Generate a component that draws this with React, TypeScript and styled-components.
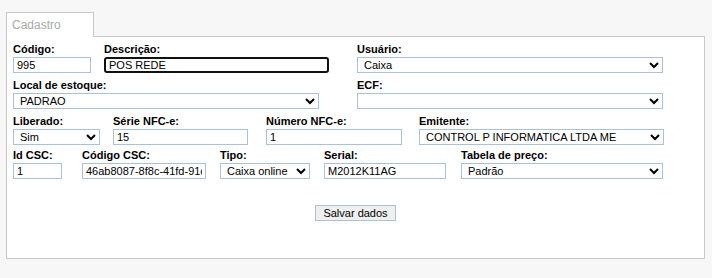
import * as React from 'react';
import styled, { createGlobalStyle } from 'styled-components';

const GlobalStyle = createGlobalStyle`
  html, body {
    margin: 0;
    padding: 0;
    background: #f7f7f7;
  }
  body {
    font-family: "Liberation Sans", Arial, sans-serif;
  }
`;

const Page = styled.div`
  padding: 12px 7px 0 6px;
`;

const TabBar = styled.div`
  display: flex;
  height: 25px;
`;

const Tab = styled.div`
  box-sizing: border-box;
  width: 88px;
  border: 1px solid #c9c9c9;
  border-bottom: none;
  background: #fff;
  color: #a9a9a9;
  font-size: 12px;
  line-height: 14px;
  padding: 5px 0 0 5px;
`;

const TabFill = styled.div`
  flex: 1;
  border-bottom: 1px solid #c9c9c9;
`;

const Panel = styled.div`
  background: #fff;
  border: 1px solid #c9c9c9;
  border-top: none;
  padding: 6px 6px 37px 6px;
`;

const Row = styled.div<{ $mt?: number }>`
  display: flex;
  align-items: flex-start;
  margin-top: ${p => p.$mt ?? 0}px;
`;

const Field = styled.div<{ $w: number; $ml?: number }>`
  display: flex;
  flex-direction: column;
  width: ${p => p.$w}px;
  margin-left: ${p => p.$ml ?? 0}px;
`;

const Label = styled.label`
  font-size: 11px;
  font-weight: bold;
  line-height: 13px;
  color: #000;
  margin-bottom: 1px;
  white-space: nowrap;
`;

const TextInput = styled.input<{ $focused?: boolean }>`
  box-sizing: border-box;
  width: 100%;
  height: 16px;
  margin: 0;
  padding: 0 3px;
  font-family: "Liberation Sans", Arial, sans-serif;
  font-size: 11px;
  color: #000;
  background: #fff;
  border: ${p => (p.$focused ? '2px solid #111' : '1px solid #a8c2d6')};
  border-radius: ${p => (p.$focused ? '3px' : '0')};
  outline: none;
`;

const Select = styled.select`
  box-sizing: border-box;
  width: 100%;
  height: 16px;
  margin: 0;
  padding: 0 0 0 2px;
  font-family: "Liberation Sans", Arial, sans-serif;
  font-size: 11px;
  color: #000;
  background-color: #fff;
  border: 1px solid #a8c2d6;
  border-radius: 0;
  outline: none;
`;

const Actions = styled.div`
  display: flex;
  justify-content: center;
  margin-top: 26px;
`;

const Button = styled.button`
  box-sizing: border-box;
  width: 81px;
  height: 16px;
  padding: 0;
  font-family: "Liberation Sans", Arial, sans-serif;
  font-size: 11px;
  line-height: 14px;
  color: #000;
  background: #efefef;
  border: 1px solid #a8c2d6;
  border-radius: 0;
`;

const noop = () => {};

export default function App() {
  return (
    <>
      <GlobalStyle />
      <Page>
        <TabBar>
          <Tab>Cadastro</Tab>
          <TabFill />
        </TabBar>
        <Panel>
          <Row>
            <Field $w={78}>
              <Label>Código:</Label>
              <TextInput value="995" onChange={noop} />
            </Field>
            <Field $w={225} $ml={13}>
              <Label>Descrição:</Label>
              <TextInput $focused value="POS REDE" onChange={noop} />
            </Field>
            <Field $w={306} $ml={28}>
              <Label>Usuário:</Label>
              <Select value="caixa" onChange={noop}>
                <option value="caixa">Caixa</option>
              </Select>
            </Field>
          </Row>
          <Row $mt={6}>
            <Field $w={306}>
              <Label>Local de estoque:</Label>
              <Select value="padrao" onChange={noop}>
                <option value="padrao">PADRAO</option>
              </Select>
            </Field>
            <Field $w={306} $ml={38}>
              <Label>ECF:</Label>
              <Select value="" onChange={noop}>
                <option value=""></option>
              </Select>
            </Field>
          </Row>
          <Row $mt={6}>
            <Field $w={87}>
              <Label>Liberado:</Label>
              <Select value="sim" onChange={noop}>
                <option value="sim">Sim</option>
                <option value="nao">Não</option>
              </Select>
            </Field>
            <Field $w={135} $ml={13}>
              <Label>Série NFC-e:</Label>
              <TextInput value="15" onChange={noop} />
            </Field>
            <Field $w={136} $ml={18}>
              <Label>Número NFC-e:</Label>
              <TextInput value="1" onChange={noop} />
            </Field>
            <Field $w={245} $ml={17}>
              <Label>Emitente:</Label>
              <Select value="control" onChange={noop}>
                <option value="control">CONTROL P INFORMATICA LTDA ME</option>
              </Select>
            </Field>
          </Row>
          <Row $mt={4}>
            <Field $w={49}>
              <Label>Id CSC:</Label>
              <TextInput value="1" onChange={noop} />
            </Field>
            <Field $w={124} $ml={20}>
              <Label>Código CSC:</Label>
              <TextInput value="46ab8087-8f8c-41fd-91c4-2b7e03a5d9f1" onChange={noop} />
            </Field>
            <Field $w={90} $ml={14}>
              <Label>Tipo:</Label>
              <Select value="online" onChange={noop}>
                <option value="online">Caixa online</option>
              </Select>
            </Field>
            <Field $w={122} $ml={14}>
              <Label>Serial:</Label>
              <TextInput value="M2012K11AG" onChange={noop} />
            </Field>
            <Field $w={202} $ml={15}>
              <Label>Tabela de preço:</Label>
              <Select value="padrao" onChange={noop}>
                <option value="padrao">Padrão</option>
              </Select>
            </Field>
          </Row>
          <Actions>
            <Button type="button">Salvar dados</Button>
          </Actions>
        </Panel>
      </Page>
    </>
  );
}
